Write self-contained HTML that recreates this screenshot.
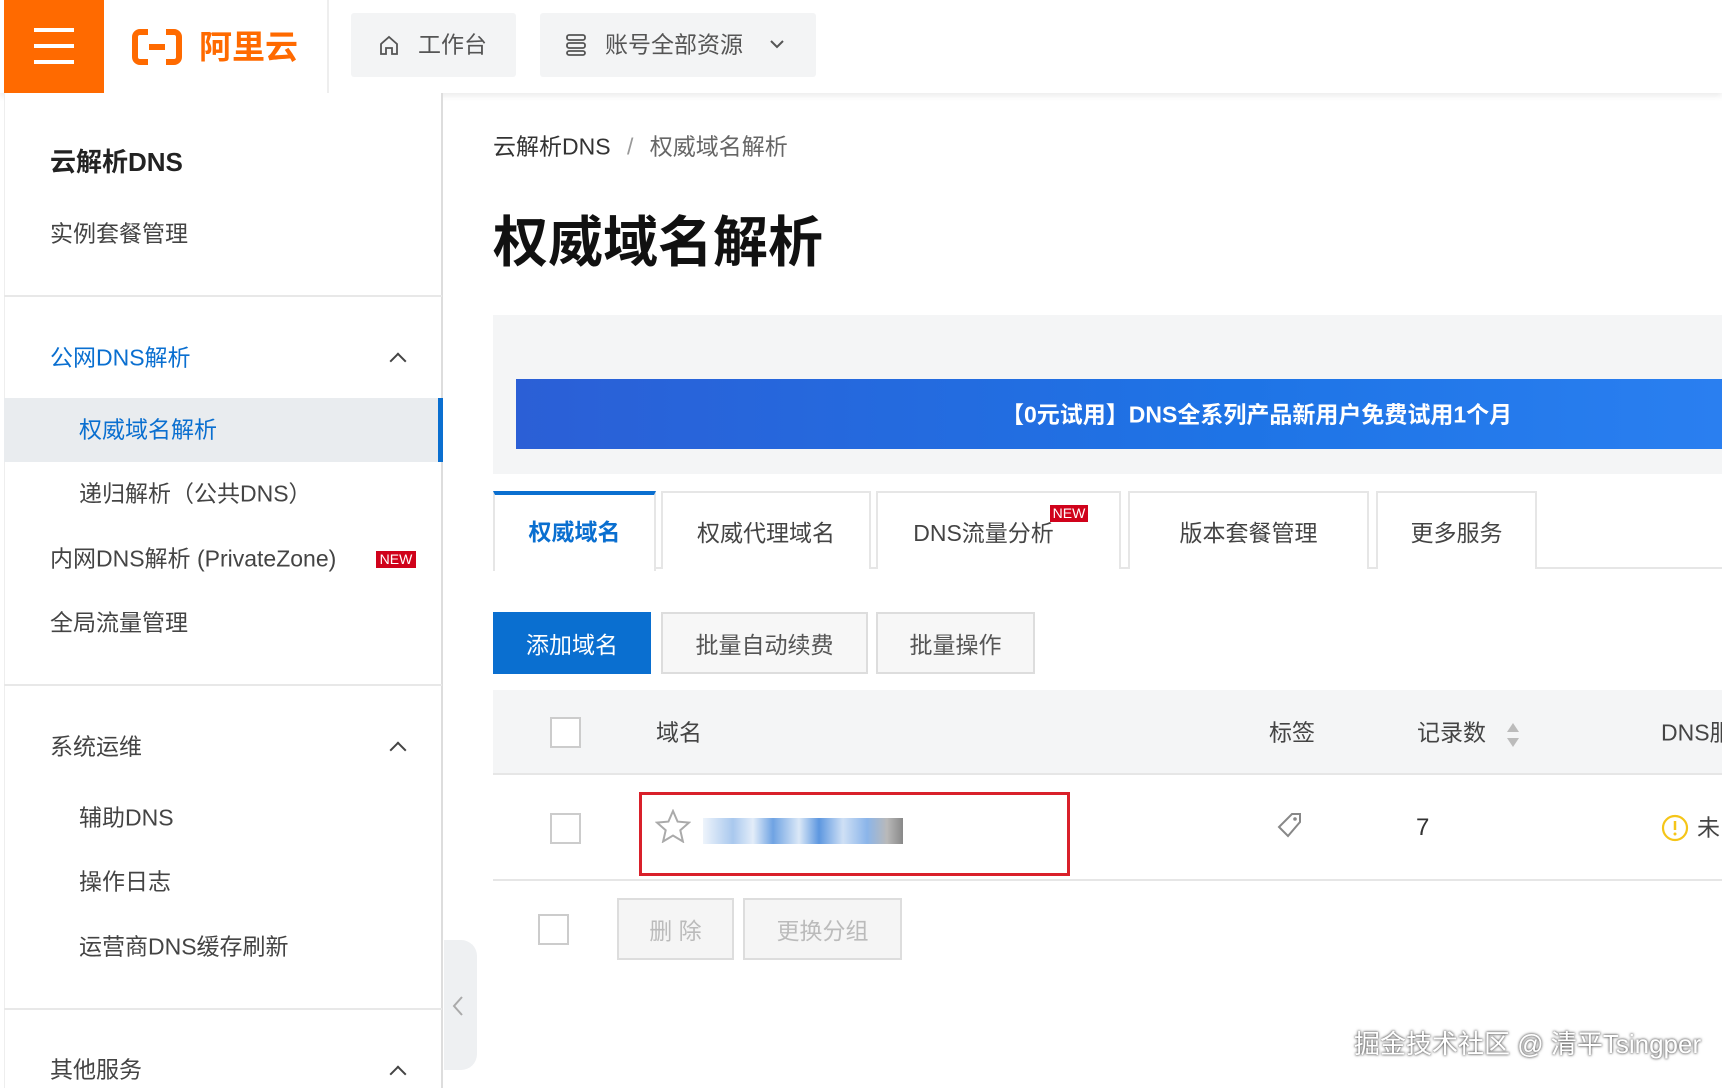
<!DOCTYPE html>
<html><head><meta charset="utf-8"><style>
*{margin:0;padding:0;box-sizing:border-box}
body{width:1722px;height:1088px;overflow:hidden;background:#fff;font-family:"Liberation Sans","Noto Sans CJK SC",sans-serif;color:#333;position:relative}
.a{position:absolute;white-space:nowrap}
.t{line-height:1;transform:translateY(-50%)}
.hl{position:absolute;height:2px;background:#e8e8e8}
.btn{position:absolute;border:2px solid #ddd;background:#f7f7f7;font-size:23px;color:#555;display:flex;align-items:center;justify-content:center}
.tab{position:absolute;top:491px;height:78px;border:2px solid #e6e6e6;border-bottom:none;background:#fff;font-size:23px;color:#444;display:flex;align-items:center;justify-content:center}
.cb{position:absolute;width:31px;height:31px;border:2px solid #ccc;background:#fff}
.chev{position:absolute;width:12px;height:12px;border-left:2.5px solid #444;border-top:2.5px solid #444;transform:rotate(45deg)}
</style></head><body>
<div class="a" style="left:0;top:0;width:1722px;height:93px;background:#fff;box-shadow:0 3px 6px rgba(0,0,0,.08)"></div>
<div class="a" style="left:4px;top:0;width:100px;height:93px;background:#ff6a00"></div>
<div class="a" style="left:34px;top:28px;width:40px;height:4px;background:#fff"></div>
<div class="a" style="left:34px;top:44px;width:40px;height:4px;background:#fff"></div>
<div class="a" style="left:34px;top:60px;width:40px;height:4px;background:#fff"></div>
<svg class="a" style="left:132px;top:28px" width="50" height="38" viewBox="0 0 50 38"><path d="M16 4H8a5 5 0 0 0-5 5v20a5 5 0 0 0 5 5h8M34 4h8a5 5 0 0 1 5 5v20a5 5 0 0 1-5 5h-8M17 19h16" stroke="#ff6a00" stroke-width="6" fill="none"/></svg>
<div class="a t" style="left:199px;top:47px;font-size:33px;font-weight:bold;color:#ff6a00">阿里云</div>
<div class="a" style="left:327px;top:0;width:2px;height:93px;background:#eee"></div>
<div class="a" style="left:351px;top:13px;width:165px;height:64px;background:#f3f4f5;border-radius:3px"></div>
<svg class="a" style="left:378px;top:34px" width="22" height="22" viewBox="0 0 22 22"><path d="M3 10L11 3l8 7v10h-5v-6H8v6H3z" stroke="#555" stroke-width="1.8" fill="none"/></svg>
<div class="a t" style="left:418px;top:45px;font-size:23px;color:#555">工作台</div>
<div class="a" style="left:540px;top:13px;width:276px;height:64px;background:#f3f4f5;border-radius:3px"></div>
<svg class="a" style="left:565px;top:33px" width="22" height="24" viewBox="0 0 22 24"><rect x="2" y="2" width="18" height="5" rx="2" stroke="#555" stroke-width="1.8" fill="none"/><rect x="2" y="10" width="18" height="5" rx="2" stroke="#555" stroke-width="1.8" fill="none"/><rect x="2" y="18" width="18" height="4" rx="2" stroke="#555" stroke-width="1.8" fill="none"/></svg>
<div class="a t" style="left:605px;top:45px;font-size:23px;color:#555">账号全部资源</div>
<svg class="a" style="left:769px;top:38px" width="16" height="12" viewBox="0 0 16 12"><path d="M2 3l6 6 6-6" stroke="#555" stroke-width="2" fill="none"/></svg>

<div class="a" style="left:4px;top:93px;width:439px;height:995px;background:#fff;border-right:2px solid #ddd;border-left:1px solid #eee"></div>
<div class="a t" style="left:50px;top:162px;font-size:26px;font-weight:bold;color:#222">云解析DNS</div>
<div class="a t" style="left:50px;top:234px;font-size:23px;color:#444">实例套餐管理</div>
<div class="hl" style="left:4px;top:295px;width:438px"></div>
<div class="a t" style="left:50px;top:358px;font-size:23px;color:#0a6fd0">公网DNS解析</div>
<div class="chev" style="left:392px;top:355px"></div>
<div class="a" style="left:4px;top:398px;width:439px;height:64px;background:#e9ecef"></div>
<div class="a" style="left:438px;top:398px;width:5px;height:64px;background:#0a6fd0"></div>
<div class="a t" style="left:79px;top:430px;font-size:23px;color:#0a6fd0">权威域名解析</div>
<div class="a t" style="left:79px;top:494px;font-size:23px;color:#444">递归解析（公共DNS）</div>
<div class="a t" style="left:50px;top:559px;font-size:23px;color:#444">内网DNS解析 (PrivateZone)</div>
<div class="a" style="left:376px;top:551px;width:40px;height:17px;background:#d0021b;color:#fff;font-size:14px;line-height:17px;text-align:center">NEW</div>
<div class="a t" style="left:50px;top:623px;font-size:23px;color:#444">全局流量管理</div>
<div class="hl" style="left:4px;top:684px;width:438px"></div>
<div class="a t" style="left:50px;top:747px;font-size:23px;color:#444">系统运维</div>
<div class="chev" style="left:392px;top:744px"></div>
<div class="a t" style="left:79px;top:818px;font-size:23px;color:#444">辅助DNS</div>
<div class="a t" style="left:79px;top:882px;font-size:23px;color:#444">操作日志</div>
<div class="a t" style="left:79px;top:947px;font-size:23px;color:#444">运营商DNS缓存刷新</div>
<div class="hl" style="left:4px;top:1008px;width:438px"></div>
<div class="a t" style="left:50px;top:1070px;font-size:23px;color:#444">其他服务</div>
<div class="chev" style="left:392px;top:1068px"></div>
<div class="a" style="left:444px;top:940px;width:33px;height:130px;background:#eef0f2;border-radius:0 16px 16px 0"></div>
<svg class="a" style="left:451px;top:995px" width="14" height="22" viewBox="0 0 14 22"><path d="M11 2L3 11l8 9" stroke="#aaa" stroke-width="2" fill="none"/></svg>

<div class="a t" style="left:493px;top:147px;font-size:23px;color:#333">云解析DNS <span style="color:#999;margin:0 10px">/</span> <span style="color:#666">权威域名解析</span></div>
<div class="a t" style="left:493px;top:243px;font-size:55px;font-weight:bold;color:#111">权威域名解析</div>
<div class="a" style="left:493px;top:315px;width:1229px;height:159px;background:#f4f5f6"></div>
<div class="a" style="left:516px;top:379px;width:1206px;height:70px;background:linear-gradient(90deg,#2b5fd6,#1e74e6 60%,#2a7ff0)"></div>
<div class="a t" style="left:1001px;top:415px;font-size:23px;font-weight:bold;color:#fff">【0元试用】DNS全系列产品新用户免费试用1个月</div>

<div class="hl" style="left:493px;top:567px;width:1229px;background:#e6e6e6"></div>
<div class="tab" style="left:493px;width:163px;border-top:4px solid #0a6fd0;color:#0a6fd0;font-weight:bold;height:80px;padding-bottom:6px">权威域名</div>
<div class="tab" style="left:661px;width:210px">权威代理域名</div>
<div class="tab" style="left:876px;width:245px;padding-right:30px">DNS流量分析</div>
<div class="a" style="left:1050px;top:505px;width:38px;height:17px;background:#d0021b;color:#fff;font-size:14px;line-height:17px;text-align:center">NEW</div>
<div class="tab" style="left:1128px;width:241px">版本套餐管理</div>
<div class="tab" style="left:1376px;width:161px">更多服务</div>

<div class="a" style="left:493px;top:612px;width:158px;height:62px;background:#0a6fd0;color:#fff;font-size:23px;display:flex;align-items:center;justify-content:center">添加域名</div>
<div class="btn" style="left:661px;top:612px;width:207px;height:62px">批量自动续费</div>
<div class="btn" style="left:876px;top:612px;width:159px;height:62px">批量操作</div>

<div class="a" style="left:493px;top:690px;width:1229px;height:85px;background:#f4f5f6;border-bottom:2px solid #e6e6e6"></div>
<div class="cb" style="left:550px;top:717px"></div>
<div class="a t" style="left:656px;top:733px;font-size:23px;color:#444">域名</div>
<div class="a t" style="left:1269px;top:733px;font-size:23px;color:#444">标签</div>
<div class="a t" style="left:1417px;top:733px;font-size:23px;color:#444">记录数</div>
<svg class="a" style="left:1505px;top:721px" width="16" height="28" viewBox="0 0 16 28"><path d="M8 2l6 9H2z" fill="#bbb"/><path d="M8 26l6-9H2z" fill="#bbb"/></svg>
<div class="a t" style="left:1661px;top:733px;font-size:23px;color:#444">DNS服</div>

<div class="a" style="left:493px;top:879px;width:1229px;height:2px;background:#e6e6e6"></div>
<div class="cb" style="left:550px;top:813px"></div>
<div class="a" style="left:639px;top:792px;width:431px;height:84px;border:3px solid #d9202a"></div>
<svg class="a" style="left:655px;top:809px" width="36" height="34" viewBox="0 0 36 34"><path d="M18 2l4.6 10.6 11.4 1-8.7 7.6 2.6 11.3L18 26.5l-9.9 6 2.6-11.3L2 13.6l11.4-1z" stroke="#aaa" stroke-width="2" fill="none"/></svg>
<div class="a" style="left:703px;top:818px;width:200px;height:26px;background:linear-gradient(90deg,#eef4fb,#a9c8ee 15%,#e3edf9 25%,#6fa3e3 35%,#dbe8f7 48%,#5d97e0 58%,#cfe0f5 70%,#8bb5ea 82%,#b9b9b9 92%,#888)"></div>
<svg class="a" style="left:1276px;top:811px" width="28" height="28" viewBox="0 0 28 28"><path d="M16 3h8v8L12 25 3 16z" stroke="#888" stroke-width="2" fill="none"/><circle cx="19" cy="8" r="1.8" fill="#888"/></svg>
<div class="a t" style="left:1416px;top:828px;font-size:24px;color:#333">7</div>
<svg class="a" style="left:1660px;top:813px" width="30" height="30" viewBox="0 0 30 30"><circle cx="15" cy="15" r="12" stroke="#f5c518" stroke-width="2.2" fill="none"/><path d="M15 8v9" stroke="#f5c518" stroke-width="2.5"/><circle cx="15" cy="21" r="1.5" fill="#f5c518"/></svg>
<div class="a t" style="left:1697px;top:828px;font-size:23px;color:#444">未</div>

<div class="cb" style="left:538px;top:914px"></div>
<div class="btn" style="left:617px;top:898px;width:117px;height:62px;color:#bbb;background:#f5f5f5">删 除</div>
<div class="btn" style="left:743px;top:898px;width:159px;height:62px;color:#bbb;background:#f5f5f5">更换分组</div>

<div class="a t" style="left:1354px;top:1044px;font-size:26px;color:#fff;text-shadow:0 0 2px #555,0 0 3px #777">掘金技术社区 @ 清平Tsingper</div>
</body></html>
